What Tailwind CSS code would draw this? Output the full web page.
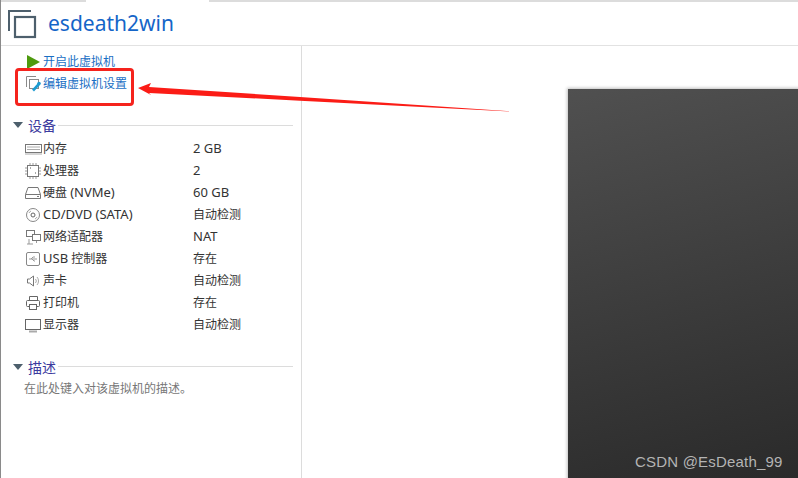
<!DOCTYPE html>
<html><head><meta charset="utf-8">
<script src="https://cdn.jsdelivr.net/npm/@tailwindcss/browser@4"></script>
</head>
<body class="m-0 bg-white overflow-hidden">
<div class="relative w-[798px] h-[478px] overflow-hidden bg-white border-l border-l-[#8a8a8a] font-['Noto_Sans','Noto_Sans_CJK_SC',sans-serif] text-[12px] text-[#333]">
  <!-- tab strip -->
  <div class="flex h-[2px] bg-[#dcdcdc]">
    <div class="w-[85px]"></div><div class="w-[123px] bg-white"></div>
  </div>
  <!-- header -->
  <div class="flex items-center h-[43px] border-b-0 pl-[6px]">
    <svg width="30" height="30" viewBox="0 0 30 30" fill="none" stroke="#4d5f6c" stroke-width="2" class="shrink-0">
      <path d="M2 22V2h22"/><rect x="8" y="8" width="20" height="20" stroke-width="2.200"/>
    </svg>
    <span class="ml-[11px] text-[21px] leading-none text-[#1565c8]">esdeath2win</span>
  </div>
  <div class="flex h-[433px] border-t border-t-[#e2e2e2]">
    <!-- sidebar -->
    <div class="w-[301px] shrink-0 border-r border-r-[#dcdcdc] h-full">
      <div class="flex items-center h-[22px] mt-[5px] pl-[26px] gap-[3px] text-[#1a6fc4]">
        <svg width="13" height="14" viewBox="0 0 13 14"><path d="M0 0L13 7L0 14Z" fill="#4e9a0e"/></svg>
        <span>开启此虚拟机</span>
      </div>
      <div class="flex items-center h-[22px] pl-[25px] gap-[2px] text-[#1a6fc4]">
        <svg width="15" height="16" viewBox="0 0 15 16" fill="none">
          <path d="M.5 11V.5H10" stroke="#8a8a8a"/><rect x="3.500" y="3.500" width="9" height="9" stroke="#8a8a8a"/>
          <path d="M7 14.500L13 8" stroke="#1d9bd1" stroke-width="2.600"/><circle cx="13" cy="7.500" r="1.800" fill="#1d9bd1"/>
        </svg>
        <span>编辑虚拟机设置</span>
      </div>
      <!-- devices header -->
      <div class="flex items-center h-[22px] mt-[19px] pl-[12px] pr-[8px]">
        <svg width="10" height="6" viewBox="0 0 10 6"><path d="M0 0H10L5 6Z" fill="#4d5f6c"/></svg>
        <span class="ml-[5px] text-[14px] text-[#3b3a9e]">设备</span>
        <div class="ml-[2px] flex-1 h-px bg-[#dcdcdc]"></div>
      </div>
      <div class="mt-[2px] pl-[23px]">
        <div class="flex items-center h-[22px]"><svg class="w-[19px] shrink-0" width="19" height="14" viewBox="0 0 19 14" fill="none" stroke="#777"><rect x="1.500" y="2.500" width="16" height="8"/><path d="M3 5h13M3 7.500h13" stroke="#aaa"/><path d="M1 12h17" stroke="#aaa"/></svg><span class="w-[150px]">内存</span><span class="text-[13px]">2 GB</span></div>
        <div class="flex items-center h-[22px]"><svg class="w-[19px] shrink-0" width="19" height="16" viewBox="0 0 19 16" fill="none" stroke="#777"><rect x="3.500" y="2.500" width="11" height="11"/><path d="M1 5h2M1 8h2M1 11h2M15 5h2M15 8h2M15 11h2M6 0v2M9 0v2M12 0v2M6 14v2M9 14v2M12 14v2" stroke="#999"/><path d="M6 5h1M11 10h1" stroke="#555"/></svg><span class="w-[150px]">处理器</span><span class="text-[13px]">2</span></div>
        <div class="flex items-center h-[22px]"><svg class="w-[19px] shrink-0" width="19" height="14" viewBox="0 0 19 14" fill="none" stroke="#777"><path d="M4 1.500h10l2.500 7v4h-15v-4z"/><path d="M1.500 8.500h15M13 10.500h2" /></svg><span class="w-[150px]">硬盘 <span class="text-[13px]">(NVMe)</span></span><span class="text-[13px]">60 GB</span></div>
        <div class="flex items-center h-[22px]"><svg class="w-[19px] shrink-0" width="19" height="16" viewBox="0 0 19 16" fill="none" stroke="#888"><circle cx="9" cy="8" r="6.500"/><circle cx="9" cy="8" r="2" stroke="#666"/><path d="M5 6a4.500 4.500 0 0 1 2-2M13 10a4.500 4.500 0 0 1-2 2" stroke="#aaa"/></svg><span class="w-[150px] text-[13px]">CD/DVD (SATA)</span><span>自动检测</span></div>
        <div class="flex items-center h-[22px]"><svg class="w-[19px] shrink-0" width="19" height="16" viewBox="0 0 19 16" fill="none" stroke="#777"><rect x="2.500" y="1.500" width="8" height="6"/><rect x="8.500" y="5.500" width="8" height="6" fill="#fff"/><path d="M5 10v5M3 15h6M12.500 12v2" stroke="#999"/></svg><span class="w-[150px]">网络适配器</span><span class="text-[13px]">NAT</span></div>
        <div class="flex items-center h-[22px]"><svg class="w-[19px] shrink-0" width="19" height="16" viewBox="0 0 19 16" fill="none" stroke="#777"><rect x="2.500" y="1.500" width="13" height="13" rx="1.500" stroke="#888"/><path d="M5 8h8M7 8l2-2h2M8 8l2 2h1" stroke="#999"/></svg><span class="w-[150px]"><span class="text-[13px]">USB</span> 控制器</span><span>存在</span></div>
        <div class="flex items-center h-[22px]"><svg class="w-[19px] shrink-0" width="19" height="14" viewBox="0 0 19 14" fill="none" stroke="#777"><path d="M3.500 5v4h2l4 3V2l-4 3z"/><path d="M11.500 5a3 3 0 0 1 0 4M13 3a6 6 0 0 1 0 8" stroke="#aaa"/></svg><span class="w-[150px]">声卡</span><span>自动检测</span></div>
        <div class="flex items-center h-[22px]"><svg class="w-[19px] shrink-0" width="19" height="16" viewBox="0 0 19 16" fill="none" stroke="#666"><path d="M5.500 5V1.500h8V5"/><rect x="2.500" y="5.500" width="13" height="6" rx="1"/><rect x="5.500" y="9.500" width="7" height="5" fill="#fff"/></svg><span class="w-[150px]">打印机</span><span>存在</span></div>
        <div class="flex items-center h-[22px]"><svg class="w-[19px] shrink-0" width="19" height="15" viewBox="0 0 19 15" fill="none" stroke="#666"><rect x="1.500" y="1.500" width="15" height="10" /><path d="M5 13.500h8" stroke="#aaa" stroke-width="2"/></svg><span class="w-[150px]">显示器</span><span>自动检测</span></div>
      </div>
      <!-- description -->
      <div class="flex items-center h-[22px] mt-[20px] pl-[12px] pr-[8px]">
        <svg width="10" height="6" viewBox="0 0 10 6"><path d="M0 0H10L5 6Z" fill="#4d5f6c"/></svg>
        <span class="ml-[5px] text-[14px] text-[#3b3a9e]">描述</span>
        <div class="ml-[2px] flex-1 h-px bg-[#dcdcdc] -mt-[1px]"></div>
      </div>
      <div class="pl-[23px] mt-[2px] text-[#777] h-[18px] leading-[18px]">在此处键入对该虚拟机的描述。</div>
    </div>
    <!-- preview -->
    <div class="flex-1 pl-[266px] pt-[43px] overflow-hidden">
      <div class="relative w-[240px] h-[400px] bg-linear-[165deg] from-[#505050] to-[#292929] shadow-[-1px_-1px_3px_rgba(0,0,0,0.25)]">
        <span class="absolute left-[67px] top-[362px] whitespace-nowrap font-['Liberation_Sans',sans-serif] text-[15px] text-[#b4b4b4] tracking-[0.2px]">CSDN @EsDeath_99</span>
      </div>
    </div>
  </div>
  <!-- annotation -->
  <div class="absolute left-[14px] top-[68px] w-[119px] h-[38px] border-[3px] border-[#f5231d] rounded-[4px]"></div>
  <svg class="absolute left-[-1px] top-[0px]" width="798" height="478" viewBox="0 0 798 478">
    <path d="M138 88L151 83L149 87L300 97L512 111.500L300 100.700L149 93L151 95Z" fill="#fb1c16"/>
  </svg>
</div>
</body></html>
